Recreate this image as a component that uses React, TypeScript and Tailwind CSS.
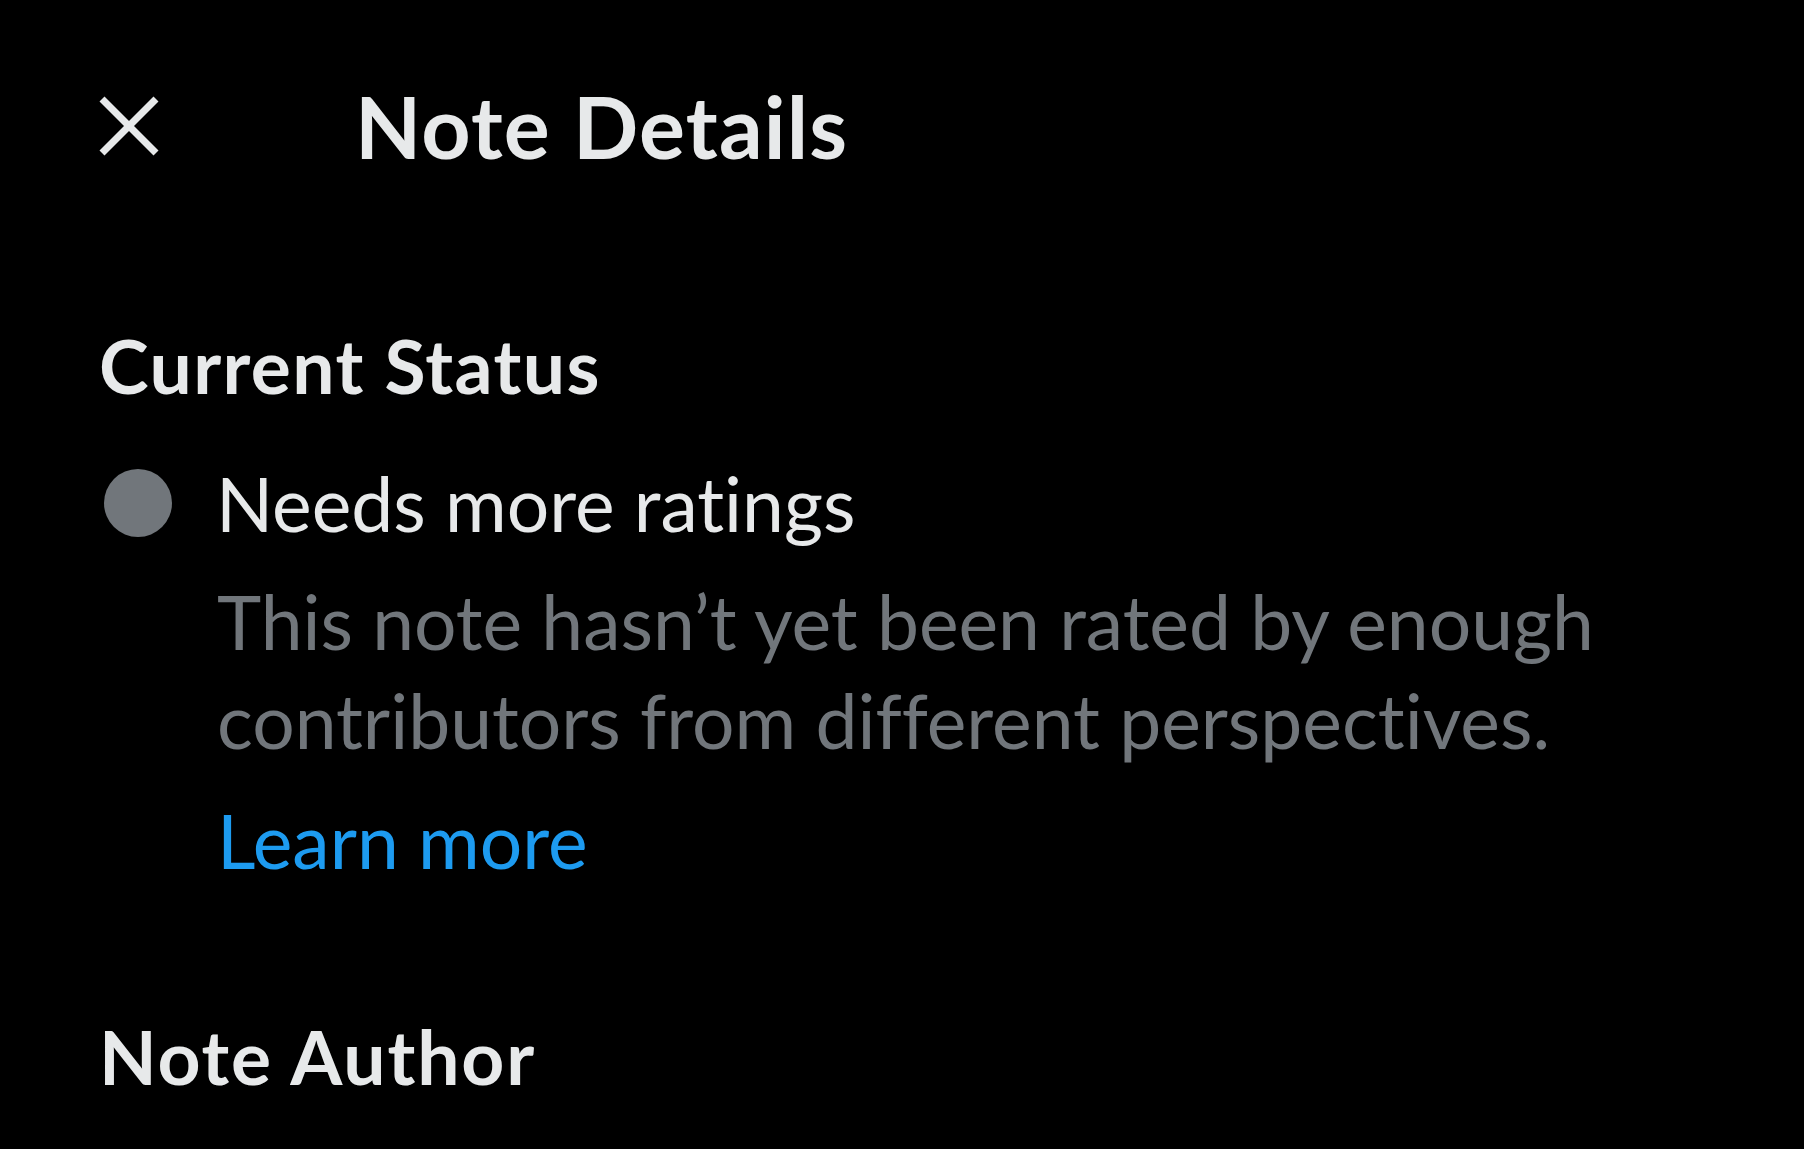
import React from "react";

function CloseIcon() {
  return (
    <svg viewBox="0 0 60 60" className="h-[60px] w-[60px]" aria-hidden="true">
      <g stroke="#e7e9ea" strokeWidth={7} strokeLinecap="butt">
        <line x1="3" y1="3" x2="57" y2="57" />
        <line x1="57" y1="3" x2="3" y2="57" />
      </g>
    </svg>
  );
}

export default function App() {
  return (
    <div className="min-h-screen bg-black pl-[99px] pr-[98px] pt-[76px] font-[Lato,sans-serif] text-[#e7e9ea] [font-variant-ligatures:none]">
      {/* Header */}
      <header className="flex h-[100px] items-center">
        <button className="flex h-[60px] w-[60px] items-center justify-center" aria-label="Close">
          <CloseIcon />
        </button>
        <h1 className="ml-[196px] text-[86px] font-bold leading-[100px] tracking-[1.2px]">Note Details</h1>
      </header>

      {/* Current status */}
      <section className="mt-[139px]">
        <h2 className="text-[75px] font-bold leading-[100px] tracking-[1.4px]">Current Status</h2>
        <div className="mt-[38px] flex h-[100px] items-center">
          <span className="ml-[5px] h-[68px] w-[68px] shrink-0 rounded-full bg-[#71767b]" />
          <span className="ml-[44px] text-[75px] leading-[100px]">Needs more ratings</span>
        </div>
        <p className="mt-[19px] pl-[118px] text-[75px] leading-[99px] text-[#71767b]">
          This note hasn’t yet been rated by enough contributors from different perspectives.
        </p>
        <a href="#" className="mt-[20px] ml-[118px] block w-fit text-[75px] leading-[100px] text-[#1d9bf0]">
          Learn more
        </a>
      </section>

      {/* Author */}
      <h2 className="mt-[116px] text-[75px] font-bold leading-[100px] tracking-[1.8px]">Note Author</h2>
    </div>
  );
}
